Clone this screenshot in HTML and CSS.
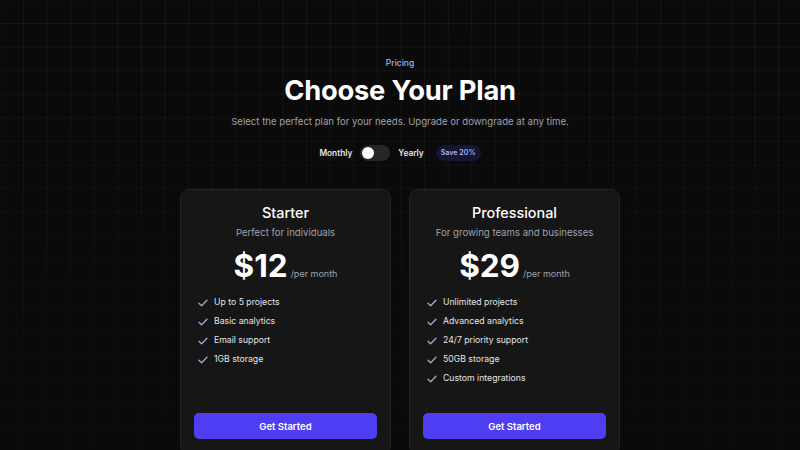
FILE: index.html
```html
<!DOCTYPE html>
<html>
<head>
<meta charset="utf-8">
<link rel="stylesheet" href="styles.css">
</head>
<body>
<div class="grid-bg"></div>
<main class="page">
  <header class="head">
    <div class="eyebrow">Pricing</div>
    <h1 class="title">Choose Your Plan</h1>
    <p class="lead">Select the perfect plan for your needs. Upgrade or downgrade at any time.</p>
    <div class="toggle-row">
      <span class="toggle-label">Monthly</span>
      <span class="switch"><span class="knob"></span></span>
      <span class="toggle-label">Yearly</span>
      <span class="badge">Save 20%</span>
    </div>
  </header>
  <section class="plans">
    <article class="card">
      <h2 class="plan-name">Starter</h2>
      <p class="plan-desc">Perfect for individuals</p>
      <div class="price"><span class="amount">$12</span><span class="per">/per month</span></div>
      <ul class="features">
        <li><svg class="check" viewBox="0 0 12 12"><path d="M2 6.3l2.6 2.5L10 3.3"/></svg>Up to 5 projects</li>
        <li><svg class="check" viewBox="0 0 12 12"><path d="M2 6.3l2.6 2.5L10 3.3"/></svg>Basic analytics</li>
        <li><svg class="check" viewBox="0 0 12 12"><path d="M2 6.3l2.6 2.5L10 3.3"/></svg>Email support</li>
        <li><svg class="check" viewBox="0 0 12 12"><path d="M2 6.3l2.6 2.5L10 3.3"/></svg>1GB storage</li>
      </ul>
      <button class="cta">Get Started</button>
    </article>
    <article class="card">
      <h2 class="plan-name">Professional</h2>
      <p class="plan-desc">For growing teams and businesses</p>
      <div class="price"><span class="amount">$29</span><span class="per">/per month</span></div>
      <ul class="features">
        <li><svg class="check" viewBox="0 0 12 12"><path d="M2 6.3l2.6 2.5L10 3.3"/></svg>Unlimited projects</li>
        <li><svg class="check" viewBox="0 0 12 12"><path d="M2 6.3l2.6 2.5L10 3.3"/></svg>Advanced analytics</li>
        <li><svg class="check" viewBox="0 0 12 12"><path d="M2 6.3l2.6 2.5L10 3.3"/></svg>24/7 priority support</li>
        <li><svg class="check" viewBox="0 0 12 12"><path d="M2 6.3l2.6 2.5L10 3.3"/></svg>50GB storage</li>
        <li><svg class="check" viewBox="0 0 12 12"><path d="M2 6.3l2.6 2.5L10 3.3"/></svg>Custom integrations</li>
      </ul>
      <button class="cta">Get Started</button>
    </article>
  </section>
</main>
</body>
</html>
```
FILE: styles.css
```css
* { box-sizing: border-box; }
html, body { margin: 0; padding: 0; }
body {
  background: #0a0a0a;
  color: #fff;
  font-family: Inter, "Noto Sans", sans-serif;
  width: 800px;
  height: 450px;
  overflow: hidden;
  position: relative;
}
.grid-bg {
  position: absolute;
  inset: 0;
  background-image:
    linear-gradient(to right, rgba(255,255,255,0.05) 1px, transparent 1px),
    linear-gradient(to bottom, rgba(255,255,255,0.05) 1px, transparent 1px);
  background-size: 23.6px 23.6px;
  background-position: 23px 23px;
  -webkit-mask-image: linear-gradient(to bottom, #000 0%, rgba(0,0,0,0.6) 50%, rgba(0,0,0,0.15) 100%);
  mask-image: linear-gradient(to bottom, #000 0%, rgba(0,0,0,0.6) 50%, rgba(0,0,0,0.15) 100%);
}
.page {
  position: relative;
  display: flex;
  flex-direction: column;
  align-items: center;
  padding-top: 57px;
}
.head {
  display: flex;
  flex-direction: column;
  align-items: center;
}
.eyebrow {
  font-size: 8.5px;
  line-height: 12px;
  color: #a5b4fc;
  font-weight: 500;
}
.title {
  margin: 4px 0 0;
  font-size: 27.3px;
  line-height: 36px;
  font-weight: 700;
  letter-spacing: -0.2px;
}
.lead {
  margin: 6px 0 0;
  font-size: 9.6px;
  line-height: 14px;
  color: #a1a1aa;
}
.toggle-row {
  margin-top: 16px;
  display: flex;
  align-items: center;
  gap: 8px;
  height: 16px;
}
.toggle-label {
  font-size: 8.3px;
  font-weight: 600;
  color: #e5e5e5;
}
.switch {
  width: 30px;
  height: 16px;
  border-radius: 8px;
  background: #27272a;
  padding: 2px;
  display: flex;
  align-items: center;
}
.knob {
  width: 12px;
  height: 12px;
  border-radius: 50%;
  background: #fff;
}
.badge {
  margin-left: 4px;
  font-size: 7.1px;
  font-weight: 600;
  color: #a5b4fc;
  background: rgba(79,70,229,0.18);
  border-radius: 999px;
  padding: 3px 5px;
  line-height: 10px;
}
.plans {
  margin-top: 28px;
  display: grid;
  grid-template-columns: 211px 211px;
  gap: 18px;
}
.card {
  background: #161616;
  border: 1px solid #232323;
  border-radius: 9px;
  padding: 13px 13px 15px;
  height: 266px;
  display: flex;
  flex-direction: column;
  align-items: center;
}
.plan-name {
  margin: 0;
  font-size: 14.4px;
  line-height: 20px;
  font-weight: 500;
}
.plan-desc {
  margin: 3px 0 0;
  font-size: 9.6px;
  line-height: 14px;
  color: #9ca3af;
}
.price {
  margin-top: 6px;
  display: flex;
  align-items: baseline;
  gap: 3px;
  height: 40px;
}
.amount {
  font-size: 31.5px;
  line-height: 40px;
  font-weight: 700;
}
.per {
  font-size: 9px;
  color: #9ca3af;
}
.features {
  list-style: none;
  margin: 10px 0 0;
  padding: 0 0 0 3px;
  align-self: stretch;
  display: flex;
  flex-direction: column;
  gap: 6px;
}
.features li {
  display: flex;
  align-items: center;
  gap: 5px;
  font-size: 8.7px;
  line-height: 13px;
  color: #e5e5e5;
}
.check {
  width: 12px;
  height: 12px;
  fill: none;
  stroke: #a5a8d8;
  stroke-width: 1.3;
  stroke-linecap: round;
  stroke-linejoin: round;
}
.cta {
  margin-top: auto;
  align-self: stretch;
  height: 26px;
  border: 0;
  border-radius: 5px;
  background: #4f3df2;
  color: #fff;
  font-family: inherit;
  font-size: 9.5px;
  font-weight: 600;
}
```
